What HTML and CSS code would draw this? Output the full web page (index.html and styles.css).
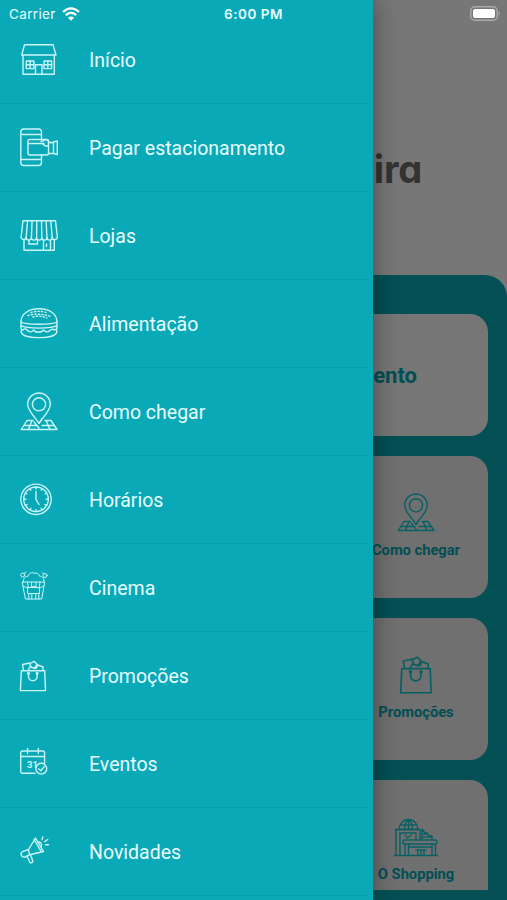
FILE: index.html
```html
<!DOCTYPE html>
<html lang="pt-BR">
<head>
<meta charset="UTF-8">
<meta name="viewport" content="width=device-width, initial-scale=1.0">
<title>Shopping</title>
<link rel="stylesheet" href="styles.css">
</head>
<body>
    <svg class="sprite">
        <symbol id="pin" viewBox="0 0 40 40">
            <path d="M20 31.500C16.500 25.500 8.700 19 8.700 12.300a11.300 11.300 0 0 1 22.600 0C31.300 19 23.500 25.500 20 31.500z"/>
            <circle cx="20" cy="12.300" r="6.600"/>
            <path d="M14 28.500H8L2.300 37.500H38L32 28.500H26M5.500 33.500H17M23 33.500H35M13 28.500L9.500 37.500M27 28.500L31 37.500M15 30l5 6M20 31.500l3-5"/>
        </symbol>
        <symbol id="bag" viewBox="0 3 28 32">
            <path d="M2.300 13.700H25.700L26.500 33.600H1.400z"/>
            <path d="M9.500 16.500V19.500a4.300 4.300 0 0 0 8.600 0V16.500"/>
            <circle cx="9.500" cy="16.300" r=".8"/>
            <circle cx="18.100" cy="16.300" r=".8"/>
            <path d="M4.500 13.500L3.500 7.500l7-1.500 1.500 4M11 6.500l4-2.200 3.200 3.200-3 4M9 13.500l2-3.500 6 1.500 2-3.500 5 2v3.500"/>
        </symbol>
    </svg>

    <div class="phone">
        <main class="page">
            <header class="brand">eira</header>
            <section class="panel">
                <div class="card card-wide">Pagar estacionamento</div>
                <div class="card">
                    <svg class="card-icon"><use href="#pin"/></svg>
                    <span>Como chegar</span>
                </div>
                <div class="card">
                    <svg class="card-icon card-icon-bag"><use href="#bag"/></svg>
                    <span>Promoções</span>
                </div>
                <div class="card card-last">
                    <svg class="card-icon card-icon-mall" viewBox="0 0 44 40">
                        <path d="M5 12.500a9.500 10 0 0 1 19 0M5 12.500H24M7 8H22.500M14.500 2.500v10M10.500 12.500q0-7 4-10q4 3 4 10"/>
                        <path d="M1.500 12.500H26V22M2 12.500V38M6 38V16H22V22M0.500 38.500H44M11 18l2.500 3 4-3"/>
                        <rect x="9" y="23" width="34" height="4" rx="1.500"/>
                        <path d="M11 27V38M14.500 27V38M38 27V38M41.500 27V38M14.500 30H38M22 33H32M24 33v5M27 33v5M30 33v5M28 22V12l3 4h2l2 3h3v3M28 17h5M28 20h9"/>
                    </svg>
                    <span>O Shopping</span>
                </div>
            </section>
        </main>
        <div class="overlay"></div>

        <nav class="drawer">
            <a class="item">
                <svg class="icon" viewBox="0 0 40 40">
                    <path d="M2.700 15L5.500 4.800H34L37 15zM4 15V34.300H35.300V15M16.500 34V24.800H23V34"/>
                    <rect x="7.300" y="21" width="7.600" height="7.600"/>
                    <rect x="25" y="21" width="7.600" height="7.600"/>
                    <path d="M11.100 21v7.600M7.300 24.800h7.600M28.800 21v7.600M25 24.800h7.600"/>
                </svg>
                <span>Início</span>
            </a>
            <a class="item">
                <svg class="icon" viewBox="0 0 40 40">
                    <path d="M22.500 11V4a3 3 0 0 0-3-3H4.800a3 3 0 0 0-3 3V34.500a3 3 0 0 0 3 3H19.500a3 3 0 0 0 3-3V27M2 6.500H22.500M2 31.500H22.500"/>
                    <rect x="9" y="11.500" width="20.500" height="15.500" rx="1.500"/>
                    <path d="M9 15.500H25M29.500 14.500h5M22 13.500l5-2 5 3.500M24 16.500l3 1.500h2.500M29.500 25.500h5M34.500 15V25M34.500 14l3.800-1V26.500L34.500 25.500"/>
                </svg>
                <span>Pagar estacionamento</span>
            </a>
            <a class="item">
                <svg class="icon" viewBox="0 0 40 40">
                    <path d="M4 4.700H36.500L38.300 20.500a2.500 2.500 0 0 1-5.100 1a2.500 2.500 0 0 1-5.200 0a2.500 2.500 0 0 1-5.200 0a2.500 2.500 0 0 1-5.200 0a2.500 2.500 0 0 1-5.200 0a2.500 2.500 0 0 1-5.200 0a2.500 2.500 0 0 1-5-1z"/>
                    <path d="M8.500 5L7.200 21.500M13.100 5L12.400 21.500M17.800 5L17.600 21.500M22.500 5L22.800 21.500M27.100 5L28 21.500M31.800 5L33.200 21.500"/>
                    <path d="M5 24V34.300H35.300V24M10 24v4h8.500v-4M24.500 34V24M31.500 34V24M27.500 28v2.500"/>
                </svg>
                <span>Lojas</span>
            </a>
            <a class="item">
                <svg class="icon" viewBox="0 0 40 40">
                    <path d="M2 18C2 9.500 10 4.800 20 4.800S38 9.500 38 18C34 21 6 21 2 18z"/>
                    <path d="M2 18v3.500C7 25 33 25 38 21.500V18M2 22c-.7 2 .5 3.500 2 4 1.500-1.500 3-1.500 4 0 2 2.500 5 2.500 6.500 0 2 3 8 3 10 0 2 2.500 5 2.500 7 0 1.500-1 3-1 4 0 2-.5 3-2 2.500-4M2.300 26v2.500C5 35.300 35 35.300 37.700 28.500V26"/>
                    <path stroke-dasharray="1.300 2.200" d="M12 8.500Q20 6 29 9M9 11.500Q20 8.500 32 12.500M14 13Q20 11 28 14"/>
                </svg>
                <span>Alimentação</span>
            </a>
            <a class="item">
                <svg class="icon"><use href="#pin"/></svg>
                <span>Como chegar</span>
            </a>
            <a class="item">
                <svg class="icon" viewBox="0 0 40 40">
                    <circle cx="17" cy="19.300" r="15.200"/>
                    <circle cx="17" cy="19.300" r="12.300"/>
                    <path d="M17 11.500V19.500L20 24.500M17 7v2M17 29.600v2M4.700 19.300h2M27.300 19.300h2M10.900 8.600l.9 1.600M23.100 8.600l-.9 1.600M10.900 30l.9-1.600M23.100 30l-.9-1.600M6.400 13.200l1.500.8M27.600 13.200l-1.500.8M6.400 25.400l1.500-.8M27.600 25.400l-1.500-.8"/>
                </svg>
                <span>Horários</span>
            </a>
            <a class="item">
                <svg class="icon thin" viewBox="0 0 40 40">
                    <path d="M3.500 14H25.700L22.700 31H6.800zM4.500 14C4 10 6.500 8 9 8.300 10 5 13 4 15 5.200c3-.8 5 .8 5.600 3.100C23.500 8 25.500 11 25 14"/>
                    <path d="M8.500 14l.8 5.500M12.500 14v5.500M17 14v5.500M21 14l-.8 5.500M9.800 25.500V31M12.800 25.500V31M16.800 25.500V31M19.800 25.500V31M4 18q5 3.500 10.600 0q5 3.500 10.400 0"/>
                    <rect x="9" y="19.500" width="11.500" height="6"/>
                    <circle cx="3.700" cy="7" r="2"/>
                    <circle cx="26" cy="7.500" r="2"/>
                    <path d="M5.500 5l1.500-.8M24.200 5.500l-1-1"/>
                </svg>
                <span>Cinema</span>
            </a>
            <a class="item">
                <svg class="icon icon-bag"><use href="#bag"/></svg>
                <span>Promoções</span>
            </a>
            <a class="item">
                <svg class="icon" viewBox="0 0 40 40">
                    <path d="M16 29.300H3.500a1.800 1.800 0 0 1-1.800-1.800V8.800A1.800 1.800 0 0 1 3.500 7H23.800a1.800 1.800 0 0 1 1.800 1.800V19M1.700 12.500H25.600M8.500 4.500V9.500M19.300 4.500V9.500"/>
                    <circle cx="22.300" cy="24.700" r="5.400"/>
                    <path d="M19.700 24.800l2 2 3.500-4"/>
                    <text class="day" x="8" y="24">31</text>
                </svg>
                <span>Eventos</span>
            </a>
            <a class="item">
                <svg class="icon" viewBox="0 0 40 40">
                    <path d="M9.500 17.500L16.500 6L24.500 19.500L10.500 22.800M9.500 17.500L3.300 19.700a3 3 0 0 0 2.500 5.300L10.500 22.800zM8 24.200l3 6.300c2.500.8 3.300-.7 2.500-2.300L11.500 22.600M15 7.500L22.500 19.800M18.800 10.500c3-1.500 5 2 3.200 5"/>
                    <path d="M23 7.500l.8-2.500M25.700 9.500l3-2M26.500 12.700h3"/>
                </svg>
                <span>Novidades</span>
            </a>
        </nav>

        <div class="status">
            <div class="carrier">
                <span>Carrier</span>
                <svg class="wifi" viewBox="0 0 18 14">
                    <path d="M1 5Q9-2.300 17 5M3.800 8.100Q9 3.500 14.200 8.100"/>
                    <path class="dot" d="M6 10.700Q9 8.200 12 10.700L9 13.800z"/>
                </svg>
            </div>
            <span class="time">6:00 PM</span>
            <svg class="battery" viewBox="0 0 31 15">
                <rect class="shell" x=".8" y=".8" width="26.400" height="13.400" rx="4"/>
                <rect class="level" x="3" y="3" width="22" height="9" rx="2"/>
                <path class="tip" d="M28.600 5.500q2.500 2 0 4z"/>
            </svg>
        </div>
    </div>
</body>
</html>
```
FILE: styles.css
```css
* {
    box-sizing: border-box;
}
body {
    margin: 0;
    font-family: Roboto, "Liberation Sans", sans-serif;
}
svg {
    fill: none;
    stroke: currentColor;
    stroke-width: 1.4;
    stroke-linejoin: round;
    stroke-linecap: round;
    flex-shrink: 0;
}
.sprite {
    display: none;
}
.phone {
    position: relative;
    width: 507px;
    height: 900px;
    overflow: hidden;
}

/* home page under the drawer */
.page {
    height: 900px;
    background: #eee;
}
.brand {
    height: 275px;
    padding: 144px 85px 0 0;
    text-align: right;
    font-family: Inter, sans-serif;
    font-feature-settings: "cv11";
    font-size: 38px;
    font-weight: 750;
    line-height: 50px;
    letter-spacing: -0.2px;
    color: #666;
}
.panel {
    display: grid;
    grid-template-columns: repeat(3, 144px);
    grid-template-rows: 122px 142px 142px 110px;
    justify-content: space-between;
    row-gap: 20px;
    height: 625px;
    padding: 39px 19px 0 20px;
    border-radius: 22px 22px 0 0;
    background: #08a0aa;
}
.card {
    grid-column: 3;
    display: flex;
    flex-direction: column;
    align-items: center;
    padding-top: 37px;
    border-radius: 18px;
    background: #e0e0e0;
    color: #009faa;
    font-size: 14.7px;
    font-weight: 700;
    line-height: 20px;
    white-space: nowrap;
}
.card-wide {
    grid-column: 1 / 4;
    align-items: flex-end;
    justify-content: center;
    padding: 2px 71px 0 0;
    background: #ededed;
    font-size: 22px;
}
.card-last {
    border-radius: 18px 18px 0 0;
}
.card-icon {
    width: 40px;
    height: 40px;
    margin-bottom: 7px;
    color: #10c0c8;
}
.card-icon-bag {
    width: 34px;
}
.card-icon-mall {
    width: 44px;
}
.overlay {
    position: absolute;
    inset: 0;
    background: rgba(0, 0, 0, 0.5);
}

/* side menu */
.drawer {
    position: absolute;
    top: 0;
    left: 0;
    width: 372.5px;
    height: 900px;
    padding-top: 16px;
    background: #0aa9b7;
    box-shadow: 0 0 24px rgba(0, 0, 0, 0.4);
    color: #e9fdff;
}
.item {
    display: flex;
    align-items: center;
    gap: 30px;
    height: 88px;
    margin-right: 5px;
    padding-left: 19px;
    border-bottom: 1px solid #09a0ae;
    font-size: 19.5px;
    line-height: 24px;
}
.item span {
    padding-top: 2px;
}
.icon {
    width: 40px;
    height: 40px;
    color: #c9f5f8;
}
.icon-bag {
    width: 28px;
    height: 32px;
    margin-right: 12px;
}
.thin {
    stroke-width: 1;
}
.day {
    fill: currentColor;
    stroke: none;
    font-size: 9.5px;
    font-weight: 700;
}

/* status bar */
.status {
    position: absolute;
    top: 0;
    left: 0;
    display: grid;
    grid-template-columns: 1fr auto 1fr;
    align-items: center;
    width: 507px;
    height: 27px;
    padding: 0 6px 0 9px;
    color: #e9fdff;
    font-family: Inter, sans-serif;
    font-size: 13.5px;
}
.carrier {
    display: flex;
    align-items: center;
    gap: 6px;
    letter-spacing: 0.35px;
}
.wifi {
    width: 18px;
    height: 14px;
    stroke-width: 2.3;
    stroke-linecap: butt;
    color: #fff;
}
.dot {
    fill: #fff;
    stroke: none;
}
.time {
    margin-right: 3px;
    font-weight: 600;
    letter-spacing: 0.5px;
}
.battery {
    justify-self: end;
    width: 31px;
    height: 15px;
}
.shell {
    stroke: #aaa;
}
.level {
    fill: #fff;
    stroke: none;
}
.tip {
    fill: #aaa;
    stroke: none;
}
```
